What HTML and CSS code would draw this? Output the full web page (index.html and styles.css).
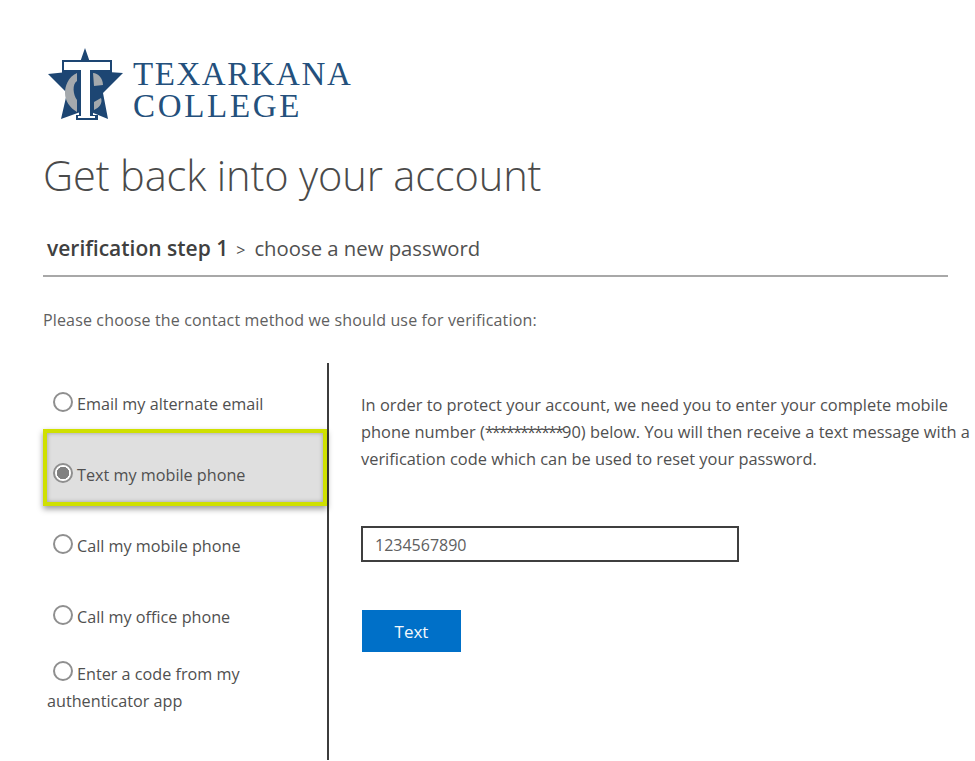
FILE: index.html
```html
<!DOCTYPE html>
<html lang="en">
<head>
<meta charset="utf-8">
<title>Get back into your account</title>
<link rel="stylesheet" href="styles.css">
</head>
<body>
<main class="page">
  <header class="logo">
    <svg class="crest" viewBox="0 0 90 90" width="90" height="90" aria-hidden="true">
      <path fill="#1d4673" d="M45 8 L53 31 L83 33 L63 53 L68 79 L46 70 L21 79 L27 53 L8 34 L37 31 Z"/>
      <path fill="#1d4673" d="M22 20 H72 V33 H53 V75 H58 V80 H36 V75 H39 V33 H22 Z"/>
      <path fill="#a4a9ad" d="M37 33 C28 37 25 46 25 53 C25 61 30 68 37 72 L37 60 C33 55 32 44 37 41 Z"/>
      <path fill="#a4a9ad" d="M53 33 C58 33 63 38 63 45 L54 46 Z M54 62 L61 58 C63 63 59 68 54 70 Z"/>
      <path fill="#ffffff" d="M24 22 H70 V30 H50 V76 H55 V78 H38 V76 H41 V30 H24 Z"/>
    </svg>
    <div class="wordmark"><span class="w1">TEXARKANA</span><span class="w2">COLLEGE</span></div>
  </header>
  <h1 class="title">Get back into your account</h1>
  <div class="steps"><strong>verification step 1</strong><span class="sep">&gt;</span><span>choose a new password</span></div>
  <p class="prompt">Please choose the contact method we should use for verification:</p>
  <section class="method">
    <div class="options">
      <label class="option"><span class="radio"></span><span class="lbl">Email my alternate email</span></label>
      <label class="option selected"><span class="radio on"></span><span class="lbl">Text my mobile phone</span></label>
      <label class="option"><span class="radio"></span><span class="lbl">Call my mobile phone</span></label>
      <label class="option"><span class="radio"></span><span class="lbl">Call my office phone</span></label>
      <label class="option multi"><span class="radio"></span><span>Enter a code from my</span><span class="wrap">authenticator app</span></label>
    </div>
    <div class="detail">
      <p class="info">In order to protect your account, we need you to enter your complete mobile<br>phone number (<span class="stars">***********</span>90) below. You will then receive a text message with a<br>verification code which can be used to reset your password.</p>
      <div class="field">1234567890</div>
      <button class="send" type="button">Text</button>
    </div>
  </section>
</main>
</body>
</html>
```
FILE: styles.css
```css
* { box-sizing: border-box; }
html, body { margin: 0; background: #fff; }
body { width: 975px; height: 761px; overflow: hidden; font-family: "Open Sans", "Noto Sans", sans-serif; color: #505050; }
.page { padding: 40px 0 0 43px; }

.logo { display: flex; align-items: flex-start; height: 100px; margin-left: -3px; }
.crest { flex: none; filter: blur(.4px); }
.wordmark { display: flex; flex-direction: column; margin: 18px 0 0 3px; font-family: "Liberation Serif", serif; font-size: 33px; line-height: 32px; color: #24507c; }
.w1 { letter-spacing: 1.55px; }
.w2 { letter-spacing: 2.7px; }

.title { margin: 5px 0 0; font-weight: 300; font-size: 41.6px; line-height: 60px; color: #4a4a4a; letter-spacing: -.15px; }

.steps { display: flex; align-items: baseline; width: 905px; height: 49px; margin-top: 23px; padding: 5px 0 0 4px; border-bottom: 2px solid #a8a8a8; font-size: 20.3px; line-height: 30px; color: #505050; }
.steps strong { font-weight: 600; font-size: 21px; color: #404040; }
.sep { margin: 0 9px 0 8px; font-size: 16px; }

.prompt { margin: 30px 0 0; font-size: 16px; letter-spacing: .15px; line-height: 26px; color: #606060; }

.method { display: flex; margin-top: 30px; height: 397px; }
.options { width: 286px; flex: none; border-right: 2px solid #3c3c3c; padding-top: 5px; font-size: 16.2px; color: #505050; }
.option { display: flex; align-items: flex-start; height: 71px; padding: 24px 0 0 10px; line-height: 22px; }
.option .radio { flex: none; width: 20px; height: 20px; margin: 0 4px 0 0; border: 2px solid #8f8f8f; border-radius: 50%; background: #fff; }
.lbl { margin-top: 1px; }
.radio.on { background: radial-gradient(circle, #808080 0 6px, #fff 6.5px); }
.selected { width: 284px; height: 77px; margin: -10px 0 4px; padding-top: 30px; border: 4px solid #cfe000; padding-left: 6px; background: #dfdfdf; box-shadow: 0 3px 6px rgba(0,0,0,.4), inset 0 0 4px rgba(0,0,0,.3); }
.multi { flex-wrap: wrap; height: auto; padding-top: 9px; line-height: 27px; }
.wrap { width: 100%; margin-left: -6px; }

.detail { flex: none; width: 640px; padding: 28px 0 0 32px; }
.info { margin: 0; font-size: 16.4px; line-height: 27px; white-space: nowrap; color: #505050; }
.stars { letter-spacing: -2px; }
.field { width: 378px; height: 36px; margin-top: 54px; padding-left: 12px; border: 2px solid #3f3f3f; font-size: 16px; line-height: 35px; color: #606060; }
.send { display: block; width: 99px; height: 42px; margin: 48px 0 0 1px; padding: 0; border: 0; background: #0070c8; color: #f4f8fc; font: 400 17px "Open Sans", sans-serif; }
```
